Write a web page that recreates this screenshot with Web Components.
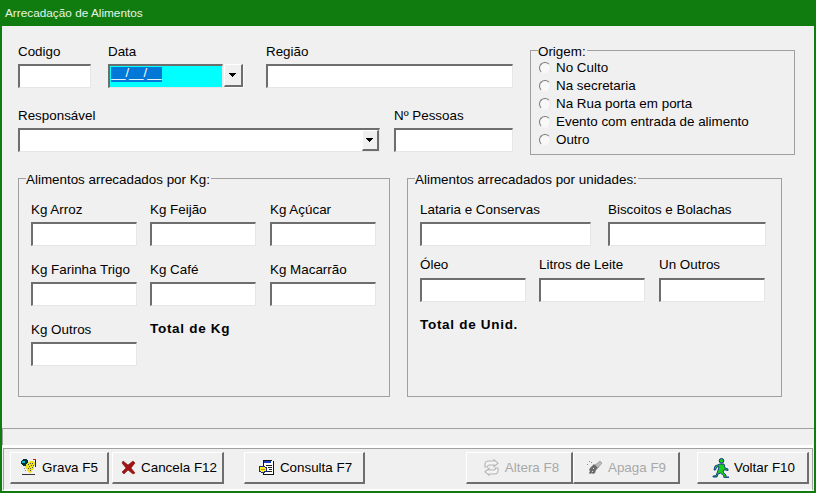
<!DOCTYPE html>
<html lang="pt-BR">
<head>
<meta charset="utf-8">
<title>Arrecadação de Alimentos</title>
<style>
  html, body { margin: 0; height: 100%; overflow: hidden; background: #f0f0f0; }
  body { font: 13.4px/16px "Liberation Sans", Arial, sans-serif; color: #000; }
</style>
</head>
<body>

<win-form caption="Arrecadação de Alimentos">
  <form-top>
    <div slot="left">
      <field-row>
        <win-field label="Codigo" style="width:73px"><win-edit></win-edit></win-field>
        <win-field label="Data" style="width:136px;margin-left:17px"><win-date></win-date></win-field>
        <win-field label="Região" style="width:247px;margin-left:22px"><win-edit></win-edit></win-field>
      </field-row>
      <field-row style="margin-top:20px">
        <win-field label="Responsável" style="width:362px"><win-edit drop></win-edit></win-field>
        <win-field label="Nº Pessoas" style="width:119px;margin-left:14px"><win-edit></win-edit></win-field>
      </field-row>
    </div>
    <win-group slot="right" legend="Origem:" style="width:265px;height:105px;padding:8px 0 0 8px">
      <win-radio>No Culto</win-radio>
      <win-radio>Na secretaria</win-radio>
      <win-radio>Na Rua porta em porta</win-radio>
      <win-radio>Evento com entrada de alimento</win-radio>
      <win-radio>Outro</win-radio>
    </win-group>
  </form-top>

  <form-groups>
    <win-group legend="Alimentos arrecadados por Kg:" style="width:372px;height:219px;padding:23px 0 0 12px">
      <field-grid style="--cols:106px 107px 106px;--row-gap:16px">
        <win-field label="Kg Arroz" style="width:106px"><win-edit></win-edit></win-field>
        <win-field label="Kg Feijão" style="width:106px"><win-edit></win-edit></win-field>
        <win-field label="Kg Açúcar" style="width:106px"><win-edit></win-edit></win-field>
        <win-field label="Kg Farinha Trigo" style="width:106px"><win-edit></win-edit></win-field>
        <win-field label="Kg Café" style="width:106px"><win-edit></win-edit></win-field>
        <win-field label="Kg Macarrão" style="width:106px"><win-edit></win-edit></win-field>
        <win-field label="Kg Outros" style="width:106px"><win-edit></win-edit></win-field>
        <win-total>Total de Kg</win-total>
      </field-grid>
    </win-group>
    <win-group legend="Alimentos arrecadados por unidades:" style="width:375px;height:219px;padding:23px 0 0 12px">
      <field-row>
        <win-field label="Lataria e Conservas" style="width:171px"><win-edit></win-edit></win-field>
        <win-field label="Biscoitos e Bolachas" style="width:158px;margin-left:17px"><win-edit></win-edit></win-field>
      </field-row>
      <field-row style="margin-top:12px;--label-lh:14px">
        <win-field label="Óleo" style="width:106px"><win-edit></win-edit></win-field>
        <win-field label="Litros de Leite" style="width:106px;margin-left:13px"><win-edit></win-edit></win-field>
        <win-field label="Un Outros" style="width:106px;margin-left:14px"><win-edit></win-edit></win-field>
      </field-row>
      <win-total style="margin-top:16px">Total de Unid.</win-total>
    </win-group>
  </form-groups>

  <win-toolbar slot="footer">
    <win-button style="width:99px">
      <svg slot="icon" width="17" height="17" viewBox="0 0 17 17" shape-rendering="crispEdges">
        <path d="M3 0h3l2 2v2L5 7H3L1 5V2z" fill="#07343a"/><path d="M2 2h3v2H2z" fill="#19b6c4"/>
        <path d="M8 3l4-1 3 1-1 6-3 5H9L5 8z" fill="#f1e21f"/>
        <path d="M8 5h1v1H8zM10 4h1v1h-1zM12 4h1v1h-1zM9 7h1v1H9zM11 6h1v1h-1zM13 6h1v1h-1zM8 9h1v1H8zM10 9h1v1h-1zM12 8h1v1h-1zM10 11h1v1h-1z" fill="#555"/>
        <path d="M13 0h3v1h-3z" fill="#d81515"/><path d="M15 1h1v7h-1z" fill="#222"/>
        <path d="M2 15h13v1H2z" fill="#333"/><path d="M4 9h1v1H4zM5 11h1v1H5z" fill="#888"/>
      </svg>
      Grava F5
    </win-button>
    <win-button style="width:112px;margin-left:3px;padding-left:3px">
      <svg slot="icon" width="15" height="15" viewBox="0 0 15 15">
        <path d="M2 1l5 4 5-4 2 2-4 5 4 5-2 1-5-4-4 4-2-2 4-4-4-5z" fill="#a11414" stroke="#7a1010" stroke-width=".6"/>
      </svg>
      Cancela F12
    </win-button>
    <win-button style="width:121px;margin-left:20px;padding-left:2px">
      <svg slot="icon" width="17" height="17" viewBox="0 0 17 17" shape-rendering="crispEdges">
        <path d="M5 1h9v1h2v14H5z" fill="#111"/><path d="M6 2h9v13H6z" fill="#fff"/>
        <path d="M6 2h7v2H6z" fill="#1c3fc4"/>
        <path d="M8 6h6v1H8zM10 8h4v1h-4zM11 10h3v1h-3zM8 12h6v1H8z" fill="#222"/>
        <path d="M1 7h6v1h2v5H7v1H3v-1H1z" fill="#1f2a78"/><path d="M2 8h5v1h1v3H6v1H3v-1H2z" fill="#f4ec2a"/>
        <path d="M3 10h4v1H3z" fill="#b79a10"/>
      </svg>
      Consulta F7
    </win-button>
    <win-button disabled style="width:107px;margin-left:auto;padding-left:4px">
      <svg slot="icon" width="17" height="17" viewBox="0 0 17 17" fill="none" stroke="#b4b4b4" stroke-width="1.1">
        <path d="M2 8V5.500C2 3.500 3.500 2 5.500 2H11V.8L15 4.200 11 7.500V6H6C5 6 4.500 6.700 4.500 8z" fill="#f4f4f4"/>
        <path d="M15 9v2.500c0 2-1.500 3.500-3.500 3.500H6v1.200L2 12.800 6 9.500V11h5c1 0 1.500-.7 1.500-2z" fill="#f4f4f4"/>
      </svg>
      Altera F8
    </win-button>
    <win-button disabled style="width:107px">
      <svg slot="icon" width="17" height="16" viewBox="0 0 17 16">
        <path d="M9 5l5-4 2 2-4 5z" fill="#b9b9b9" stroke="#8f8f8f" stroke-width=".6"/>
        <path d="M6 6l2-2 4 4-2 2-1 3-2 1-1-1-2 1-1-1 1-2-1-1 1-2z" fill="#6b6b6b"/>
        <path d="M3 1h1v1H3zM1 4h1v1H1zM5 2h1v1H5z" fill="#8a8a8a"/>
        <path d="M7 8h1v1H7zM6 11h1v1H6z" fill="#e4e4e4"/>
      </svg>
      Apaga F9
    </win-button>
    <win-button style="width:112px;margin-left:17px;padding-left:2px">
      <svg slot="icon" width="17" height="20" viewBox="0 0 17 20">
        <circle cx="9.500" cy="2.800" r="2.300" fill="#17d017" stroke="#10308c"/>
        <path d="M8 6l4 0 1 4 3 1v1.500l-4-.8-1 2.300 3 3v2h3v.8h-5l-.4-2.300-3-2.400L6 16l-1 3H1v-1l3-.3L6.500 11l.3-3-2.300 1.500L3.500 12H2l1-4z" fill="#17d017" stroke="#10308c" stroke-width=".9" stroke-linejoin="round"/>
      </svg>
      Voltar F10
    </win-button>
  </win-toolbar>
</win-form>

<script>
  const BEVEL_IN = `
    border-style: solid; border-width: 2px 1px 1px 2px;
    border-color: #6e6e6e #e6e6e6 #e6e6e6 #6e6e6e;
    background: #fff; box-sizing: border-box;`;

  class WinForm extends HTMLElement {
    constructor() {
      super();
      this.attachShadow({ mode: 'open' }).innerHTML = `
        <style>
          :host { display: flex; flex-direction: column; width: 816px; height: 493px; box-sizing: border-box;
                  border: 2px solid #107c10; border-top: 0; background: #f0f0f0; }
          .bar { flex: 0 0 26px; margin: 0 -2px; padding-left: 5px; background: #107c10; color: #e6f5e6;
                 font-size: 11.8px; line-height: 26px; }
          main { flex: 1; padding: 18px 0 0 16px; }
          .status { flex: 0 0 16px; margin-bottom: 3px; border-top: 1px solid #a0a0a0; border-left: 1px solid #a0a0a0; }
        </style>
        <div class="bar">${this.getAttribute('caption')}</div>
        <main><slot></slot></main>
        <div class="status"></div>
        <slot name="footer"></slot>`;
    }
  }

  class FormTop extends HTMLElement {
    constructor() {
      super();
      this.attachShadow({ mode: 'open' }).innerHTML = `
        <style>
          :host { display: flex; gap: 17px; }
          ::slotted([slot=right]) { margin-top: 6px; }
        </style>
        <slot name="left"></slot><slot name="right"></slot>`;
    }
  }

  class FormGroups extends HTMLElement {
    constructor() {
      super();
      this.attachShadow({ mode: 'open' }).innerHTML = `
        <style>:host { display: flex; gap: 17px; margin-top: 23px; }</style><slot></slot>`;
    }
  }

  class FieldRow extends HTMLElement {
    constructor() {
      super();
      this.attachShadow({ mode: 'open' }).innerHTML = `
        <style>:host { display: flex; }</style><slot></slot>`;
    }
  }

  class FieldGrid extends HTMLElement {
    constructor() {
      super();
      this.attachShadow({ mode: 'open' }).innerHTML = `
        <style>:host { display: grid; grid-template-columns: var(--cols); column-gap: 13px; row-gap: var(--row-gap); justify-items: start; }</style>
        <slot></slot>`;
    }
  }

  class WinField extends HTMLElement {
    constructor() {
      super();
      this.attachShadow({ mode: 'open' }).innerHTML = `
        <style>
          :host { display: block; flex: none; }
          label { display: block; height: 20px; line-height: var(--label-lh, 16px); white-space: nowrap; }
        </style>
        <label>${this.getAttribute('label')}</label><slot></slot>`;
    }
  }

  class WinEdit extends HTMLElement {
    constructor() {
      super();
      const drop = this.hasAttribute('drop');
      this.attachShadow({ mode: 'open' }).innerHTML = `
        <style>
          :host { display: flex; justify-content: flex-end; height: 24px; ${BEVEL_IN} }
          win-drop { height: 21px; flex-basis: 17px; }
        </style>
        ${drop ? '<win-drop></win-drop>' : ''}`;
    }
  }

  class WinDrop extends HTMLElement {
    constructor() {
      super();
      this.attachShadow({ mode: 'open' }).innerHTML = `
        <style>
          :host { display: flex; align-items: center; justify-content: center; flex: 0 0 19px; box-sizing: border-box;
                  background: #f0f0f0; border-style: solid; border-width: 1px 2px 2px 1px;
                  border-color: #fff #6e6e6e #6e6e6e #fff; }
          svg { display: block; }
        </style>
        <svg width="8" height="5" viewBox="0 0 8 5" shape-rendering="crispEdges"><path d="M0 0h7v1H6v1H5v1H4v1H3V3H2V2H1V1H0z" fill="#000"/></svg>`;
    }
  }

  class WinDate extends HTMLElement {
    constructor() {
      super();
      this.attachShadow({ mode: 'open' }).innerHTML = `
        <style>
          :host { display: flex; height: 24px; }
          .box { flex: 0 0 115px; display: flex; align-items: flex-start; padding: 1px 0 0 1px; ${BEVEL_IN} background: #00ffff; }
          .sel { display: block; height: 15px; background: #0078d7; color: #fff; font-size: 13px; line-height: 12px; white-space: pre; }
          win-drop { height: 23px; margin-left: 1px; box-shadow: 1px 1px 0 #fafafa; }
        </style>
        <div class="box"><span class="sel">__/__/__</span></div><win-drop></win-drop>`;
    }
  }

  class WinGroup extends HTMLElement {
    constructor() {
      super();
      this.attachShadow({ mode: 'open' }).innerHTML = `
        <style>
          :host { display: block; position: relative; flex: none; box-sizing: border-box; border: 1px solid #a0a0a0; }
          .legend { position: absolute; left: 7px; top: -7px; padding: 0 1px 0 0; background: linear-gradient(#f0f0f0, #f0f0f0) 0 0 / 100% 8px no-repeat; line-height: 15px; white-space: nowrap; }
        </style>
        <span class="legend">${this.getAttribute('legend')}</span><slot></slot>`;
    }
  }

  class WinRadio extends HTMLElement {
    constructor() {
      super();
      this.attachShadow({ mode: 'open' }).innerHTML = `
        <style>
          :host { display: flex; align-items: center; gap: 5px; height: 18px; white-space: nowrap; }
          i { flex: 0 0 12px; height: 12px; box-sizing: border-box; border-radius: 50%; background: #f8f8f8;
              border: 1.5px solid; border-color: #777 #e8e8e8 #f4f4f4 #777; }
        </style>
        <i></i><span><slot></slot></span>`;
    }
  }

  class WinTotal extends HTMLElement {
    constructor() {
      super();
      this.attachShadow({ mode: 'open' }).innerHTML = `
        <style>:host { display: block; font-weight: bold; font-size: 13.5px; letter-spacing: .7px; line-height: 13px; white-space: nowrap; }</style><slot></slot>`;
    }
  }

  class WinToolbar extends HTMLElement {
    constructor() {
      super();
      this.attachShadow({ mode: 'open' }).innerHTML = `
        <style>
          :host { display: flex; flex: 0 0 43px; box-sizing: border-box; margin: 0 1px; padding: 3px 3px 0 6px;
                  border-style: solid; border-width: 1px 1px 2px 1px; border-color: #a0a0a0 #a0a0a0 #fff #a0a0a0;
                  box-shadow: 0 -3px 0 #fff; }
        </style>
        <slot></slot>`;
    }
  }

  class WinButton extends HTMLElement {
    constructor() {
      super();
      this.attachShadow({ mode: 'open' }).innerHTML = `
        <style>
          :host { display: flex; align-items: center; justify-content: center; gap: 5px; flex: none; height: 32px;
                  box-sizing: border-box; background: #f0f0f0; white-space: nowrap;
                  border-style: solid; border-width: 1px 2px 2px 1px; border-color: #fff #6e6e6e #6e6e6e #fff; }
          :host([disabled]) { color: #a9a9a9; }
          ::slotted(svg) { display: block; flex: none; }
        </style>
        <slot name="icon"></slot><span><slot></slot></span>`;
    }
  }

  customElements.define('win-form', WinForm);
  customElements.define('form-top', FormTop);
  customElements.define('form-groups', FormGroups);
  customElements.define('field-row', FieldRow);
  customElements.define('field-grid', FieldGrid);
  customElements.define('win-field', WinField);
  customElements.define('win-drop', WinDrop);
  customElements.define('win-edit', WinEdit);
  customElements.define('win-date', WinDate);
  customElements.define('win-group', WinGroup);
  customElements.define('win-radio', WinRadio);
  customElements.define('win-total', WinTotal);
  customElements.define('win-toolbar', WinToolbar);
  customElements.define('win-button', WinButton);
</script>
</body>
</html>
